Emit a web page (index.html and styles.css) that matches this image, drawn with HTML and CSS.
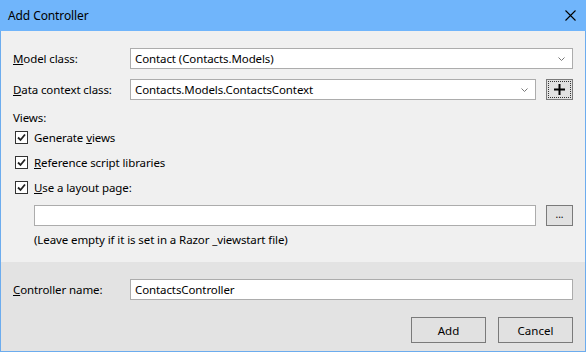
FILE: index.html
```html
<!DOCTYPE html>
<html lang="en">
  <head>
    <meta charset="UTF-8">
    <title>Add Controller</title>
    <link rel="stylesheet" href="styles.css">
  </head>
  <body>
    <div class="window">
      <div class="titlebar">
        <span class="title">Add Controller</span>
        <svg class="close" width="11" height="11" viewBox="0 0 11 11"><path d="M0.5 0.5L10.5 10.5M10.5 0.5L0.5 10.5" stroke="#000" stroke-width="1.1"/></svg>
      </div>
      <div class="main">
        <div class="row">
          <label class="label"><u>M</u>odel class:</label>
          <div class="combo">
            <span>Contact (Contacts.Models)</span>
            <svg class="chev" width="7" height="4" viewBox="0 0 7 4"><path d="M0.5 0.5L3.5 3.5L6.5 0.5" fill="none" stroke="#777" stroke-width="1"/></svg>
          </div>
        </div>
        <div class="row">
          <label class="label"><u>D</u>ata context class:</label>
          <div class="combo">
            <span>Contacts.Models.ContactsContext</span>
            <svg class="chev" width="7" height="4" viewBox="0 0 7 4"><path d="M0.5 0.5L3.5 3.5L6.5 0.5" fill="none" stroke="#777" stroke-width="1"/></svg>
          </div>
          <button class="btn small focus"><span class="ring"><svg width="11" height="11" viewBox="0 0 11 11"><path d="M5.5 0V11M0 5.5H11" stroke="#000" stroke-width="2"/></svg></span></button>
        </div>
        <div class="views">Views:</div>
        <div class="check"><span class="box"><svg width="11" height="11" viewBox="0 0 11 11"><path d="M2 5.5L4.5 8L9 2.5" fill="none" stroke="#222" stroke-width="1.8"/></svg></span><span>Generate <u>v</u>iews</span></div>
        <div class="check"><span class="box"><svg width="11" height="11" viewBox="0 0 11 11"><path d="M2 5.5L4.5 8L9 2.5" fill="none" stroke="#222" stroke-width="1.8"/></svg></span><span><u>R</u>eference script libraries</span></div>
        <div class="check"><span class="box"><svg width="11" height="11" viewBox="0 0 11 11"><path d="M2 5.5L4.5 8L9 2.5" fill="none" stroke="#222" stroke-width="1.8"/></svg></span><span><u>U</u>se a layout page:</span></div>
        <div class="layout-row">
          <div class="field"></div>
          <button class="btn small dots">...</button>
        </div>
        <div class="hint">(Leave empty if it is set in a Razor _viewstart file)</div>
      </div>
      <div class="footer">
        <div class="row">
          <label class="label"><u>C</u>ontroller name:</label>
          <div class="field text">ContactsController</div>
        </div>
        <div class="actions">
          <button class="btn wide">Add</button>
          <button class="btn wide">Cancel</button>
        </div>
      </div>
    </div>
  </body>
</html>
```
FILE: styles.css
```css
*{box-sizing:border-box}
body{margin:0;font-family:"Noto Sans","Liberation Sans",sans-serif;font-size:11.5px;letter-spacing:-0.1px;color:#000;background:#fff}
.window{width:586px;height:352px;border:1px solid #6cacee;border-top:none;display:flex;flex-direction:column;background:#f0f0f0}
.titlebar{height:31px;background:#70b5fb;display:flex;align-items:center;justify-content:space-between;padding:0 10px 0 8px;margin:0 -1px}
.title{font-size:12px}
.main{padding:17px 12px 0 12px;flex:1}
.row{display:flex;align-items:center;height:21px;margin-bottom:10px}
.label{width:117px;flex:none}
.combo,.field{flex:1;height:21px;background:#fff;border:1px solid #acacac;display:flex;align-items:center;justify-content:space-between;padding:0 7px 0 4px}
.chev{margin-top:1px}
.btn{font:inherit;background:#e1e1e1;border:1px solid #7a7a7a;color:#000;padding:0;display:flex;align-items:center;justify-content:center}
.small{width:27px;height:21px;margin-left:10px;flex:none}
.ring{width:23px;height:17px;border:1px dotted #333;display:flex;align-items:center;justify-content:center}
.views{margin-top:9px;height:15px}
.check{display:flex;align-items:center;height:25px;padding-left:2px}
.box{width:13px;height:13px;border:1px solid #333;background:#fff;margin-right:6px;display:flex;align-items:center;justify-content:center}
.layout-row{display:flex;height:21px;margin:5px 0 0 21px}
.dots{font-size:10px;line-height:1;padding-bottom:3px}
.hint{margin:6px 0 0 21px}
.footer{height:89px;background:#e3e3e3;padding:17px 12px 0 12px}
.footer .row{margin-bottom:17px}
.text{justify-content:flex-start}
.actions{display:flex;justify-content:flex-end;gap:12px}
.wide{width:75px;height:26px}
```
